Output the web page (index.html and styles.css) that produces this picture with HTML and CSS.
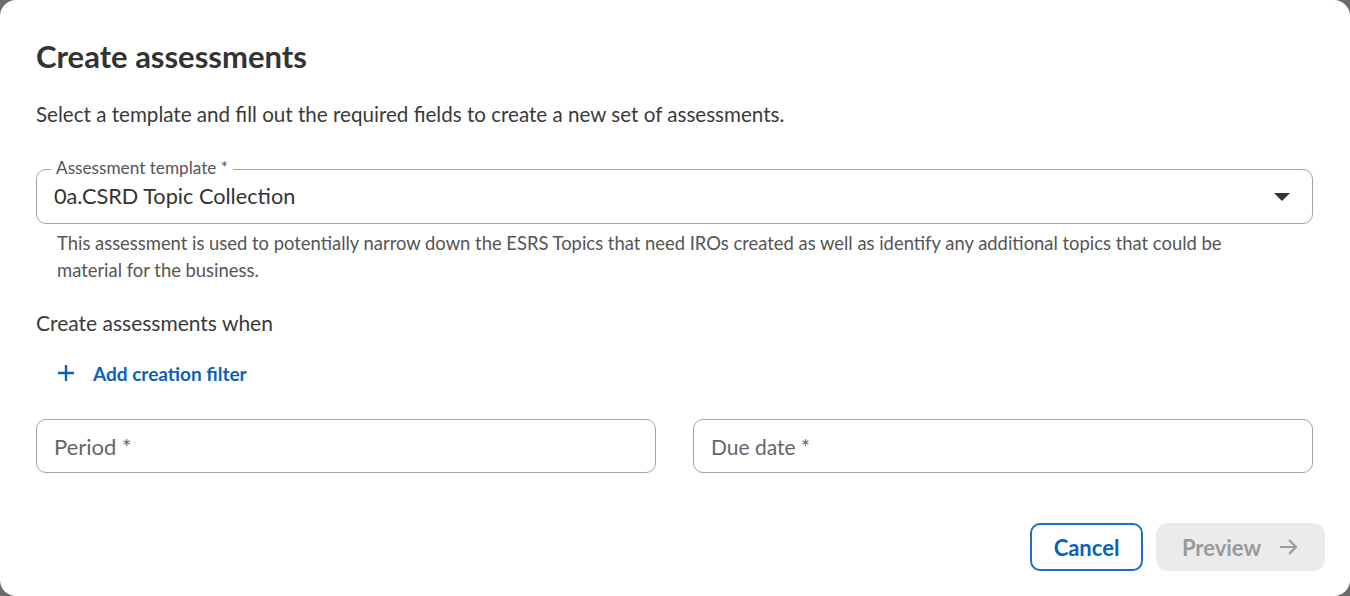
FILE: index.html
```html
<!DOCTYPE html>
<html lang="en">
<head>
    <meta charset="UTF-8">
    <title>Create assessments</title>
    <link rel="stylesheet" href="styles.css">
</head>
<body>
    <div class="dialog">
        <div class="content">
            <h1>Create assessments</h1>
            <p class="intro">Select a template and fill out the required fields to create a new set of assessments.</p>

            <div class="field select">
                <span class="label">Assessment template *</span>
                <span class="value">0a.CSRD Topic Collection</span>
                <svg class="caret" width="16" height="8" viewBox="0 0 16 8"><path d="M0 0h16L8 8z" fill="#333"/></svg>
            </div>
            <p class="helper">This assessment is used to potentially narrow down the ESRS Topics that need IROs created as well as identify any additional topics that could be material for the business.</p>

            <p class="section">Create assessments when</p>
            <button class="add-filter">
                <svg width="18" height="18" viewBox="0 0 18 18"><path d="M9 1v16M1 9h16" stroke="#0a62b8" stroke-width="2.4"/></svg>
                Add creation filter
            </button>

            <div class="row">
                <div class="field"><span class="placeholder">Period *</span></div>
                <div class="field"><span class="placeholder">Due date *</span></div>
            </div>
        </div>

        <div class="actions">
            <button class="btn cancel">Cancel</button>
            <button class="btn preview" disabled>
                Preview
                <svg width="20" height="18" viewBox="0 0 20 18"><path d="M1 9h16M10 2l7 7-7 7" fill="none" stroke="#9a9a9a" stroke-width="2.2"/></svg>
            </button>
        </div>
    </div>
</body>
</html>
```

FILE: styles.css
```css
html, body {
    margin: 0;
    height: 100%;
}
body {
    background: #6b6b6b;
    font-family: Lato, "Open Sans", sans-serif;
    color: #3a3a3a;
}
.dialog {
    height: 596px;
    box-sizing: border-box;
    background: white;
    border-radius: 16px;
    padding: 38px 25px 25px 36px;
    display: flex;
    flex-direction: column;
}
.content {
    padding-right: 12px;
}
h1 {
    margin: 0;
    font-size: 31px;
    line-height: 36px;
    font-weight: 700;
    color: #333;
}
.intro {
    margin: 26px 0 0;
    font-size: 20.6px;
    line-height: 28px;
}
.field {
    position: relative;
    height: 54px;
    box-sizing: border-box;
    border: 1px solid #a3a3a3;
    border-radius: 10px;
    padding: 0 17px;
    display: flex;
    align-items: center;
    font-size: 21px;
}
.select {
    margin-top: 41px;
    height: 55px;
}
.label {
    position: absolute;
    top: -13px;
    left: 14px;
    padding: 0 5px;
    background: white;
    font-size: 17.2px;
    line-height: 22px;
    color: #555;
}
.value {
    flex: 1;
    font-size: 21.7px;
    color: #333;
    margin-top: -2px;
}
.caret {
    margin-right: 5px;
}
.helper {
    margin: 6px 0 0;
    padding-left: 21px;
    max-width: 1200px;
    font-size: 18.4px;
    line-height: 27px;
    color: #555;
}
.section {
    margin: 25px 0 0;
    font-size: 21px;
    line-height: 28px;
}
.add-filter {
    margin-top: 16px;
    height: 40px;
    padding: 0 0 0 21px;
    border: none;
    background: none;
    display: flex;
    align-items: center;
    gap: 18px;
    font-family: inherit;
    font-size: 19px;
    font-weight: 700;
    color: #0a62b8;
    cursor: pointer;
}
.row {
    margin-top: 26px;
    display: grid;
    grid-template-columns: 1fr 1fr;
    gap: 37px;
}
.placeholder {
    color: #666;
}
.row .field:first-child .placeholder {
    font-size: 22px;
}
.actions {
    margin-top: auto;
    display: flex;
    justify-content: flex-end;
    gap: 13px;
}
.btn {
    height: 48px;
    box-sizing: border-box;
    font-family: inherit;
    font-size: 22px;
    font-weight: 700;
    display: flex;
    align-items: center;
    justify-content: center;
    gap: 18px;
}
.cancel {
    width: 113px;
    border: 2px solid #1c6fc3;
    border-radius: 10px;
    background: white;
    color: #0a62b8;
    cursor: pointer;
}
.preview {
    width: 169px;
    border: none;
    border-radius: 12px;
    background: #ebebeb;
    color: #9a9a9a;
}
```
